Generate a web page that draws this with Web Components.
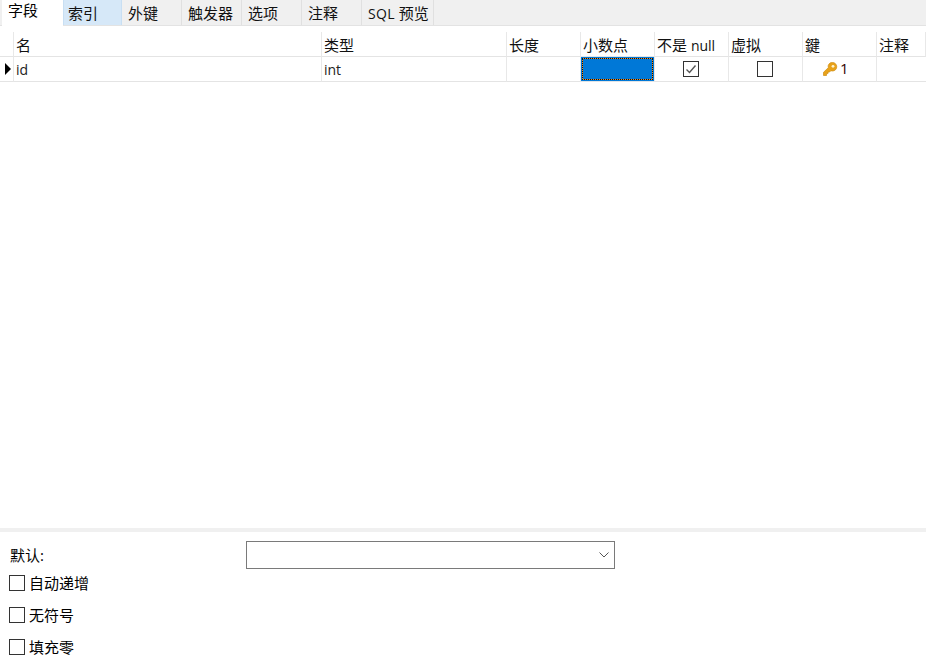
<!DOCTYPE html>
<html lang="zh">
<head>
<meta charset="UTF-8">
<title>字段</title>
<style>
  html, body { margin: 0; height: 100%; background: #fff; }
  body {
    font: 15px/20px "Open Sans", "Noto Sans CJK SC", sans-serif;
    color: #000;
    overflow: hidden;
  }
  design-page { height: 665px; }
</style>
</head>
<body>
<design-page>
  <tab-bar slot="tabs">
    <tab-item active>字段</tab-item>
    <tab-item hover>索引</tab-item>
    <tab-item>外键</tab-item>
    <tab-item>触发器</tab-item>
    <tab-item>选项</tab-item>
    <tab-item>注释</tab-item>
    <tab-item wide><span style="font-size:14px;letter-spacing:.3px">SQL</span> 预览</tab-item>
  </tab-bar>
  <field-grid slot="grid"></field-grid>
  <field-options slot="options"></field-options>
</design-page>

<script>
  class DesignPage extends HTMLElement {
    constructor() {
      super();
      this.attachShadow({ mode: "open" });
      this.shadowRoot.innerHTML = `
        <style>
          :host { display: flex; flex-direction: column; }
          .grid { display: block; flex: 1; min-height: 0; }
        </style>
        <slot name="tabs"></slot>
        <div class="grid"><slot name="grid"></slot></div>
        <slot name="options"></slot>
      `;
    }
  }

  class TabBar extends HTMLElement {
    constructor() {
      super();
      this.attachShadow({ mode: "open" });
      this.shadowRoot.innerHTML = `
        <style>
          :host {
            display: flex;
            height: 26px;
            box-sizing: border-box;
            padding-left: 2px;
            background: #f0f0f0;
            border-bottom: 1px solid #e3e3e3;
          }
        </style>
        <slot></slot>
      `;
    }
  }

  class TabItem extends HTMLElement {
    constructor() {
      super();
      this.attachShadow({ mode: "open" });
      this.shadowRoot.innerHTML = `
        <style>
          :host {
            display: block;
            width: 60px;
            height: 25px;
            box-sizing: border-box;
            padding: 3px 0 0 5px;
            border-right: 1px solid #e0e0e0;
            border-left: 1px solid transparent;
            white-space: nowrap;
            color: #111;
          }
          :host([active]) {
            width: 61px;
            height: 26px;
            padding: 0 0 0 6px;
            background: #fff;
            border: 0;
            color: #000;
          }
          :host([hover]) { width: 59px; padding-left: 4px; background: #d6e8f8; border-color: #c8dff3; }
          :host([wide]) { width: 72px; }
        </style>
        <slot></slot>
      `;
    }
  }

  const KEY_ICON = `<svg width="16" height="16" viewBox="0 0 16 16" aria-hidden="true">
    <path d="M10.500 1.500a4 4 0 0 1 0 8.500c-.6 0-1.100-.1-1.600-.3L7.500 11.100H6V12.600H4.500V14.500H1.500V11.300L6.300 6.700A4 4 0 0 1 10.500 1.500Z" fill="#e8a21a" stroke="#d08c10" stroke-width=".7"/>
    <circle cx="11" cy="5.300" r="1.400" fill="#fff3cf"/>
  </svg>`;

  class FieldGrid extends HTMLElement {
    constructor() {
      super();
      this.attachShadow({ mode: "open" });
      const heads = ["名", "类型", "长度", "小数点", `不是 <span class="latin">null</span>`, "虚拟", "鍵", "注释"];
      this.shadowRoot.innerHTML = `
        <style>
          :host { display: block; padding-top: 6px; }
          .table {
            display: grid;
            grid-template-columns: 14px 308px 185px 74px 74px 74px 74px 74px 1fr;
            grid-template-rows: 25px 25px;
          }
          .head, .cell {
            box-sizing: border-box;
            border-right: 1px solid #e8e8e8;
            border-bottom: 1px solid #e4e4e4;
            padding: 3px 0 0 2px;
            white-space: nowrap;
            overflow: hidden;
          }
          .head { padding-top: 3px; color: #111; }
          .head:last-child, .cell:last-child { border-right: 0; }
          .latin { font-size: 14px; }
          .cell { color: #222; }
          .marker { display: flex; align-items: center; padding: 0 0 0 5px; }
          .marker i {
            display: block; width: 0; height: 0;
            border-left: 6px solid #000;
            border-top: 6px solid transparent;
            border-bottom: 6px solid transparent;
          }
          .center { display: flex; align-items: center; justify-content: center; padding: 0 1px 0 0; }
          .sel { padding: 0; }
          .sel div {
            box-sizing: border-box;
            height: 100%;
            border: 1px solid #0078d7;
            background: #0078d7;
          }
          .sel div div {
            border: 1px dotted #111;
            background: linear-gradient(#0078d7, #0078d7) padding-box, #f08a1d border-box;
          }
          .key { display: flex; align-items: center; gap: 2px; padding: 0 0 0 19px; }
          .key span { margin-top: -3px; font-size: 15px; color: #300; }
          .box {
            display: block;
            width: 16px; height: 16px;
            box-sizing: border-box;
            border: 1px solid #333;
            background: #fff;
          }
          .box svg { display: block; }
        </style>
        <div class="table">
          <div class="head"></div>
          ${heads.map((h) => `<div class="head">${h}</div>`).join("")}
          <div class="cell marker"><i></i></div>
          <div class="cell latin">id</div>
          <div class="cell latin">int</div>
          <div class="cell"></div>
          <div class="cell sel"><div><div></div></div></div>
          <div class="cell center"><span class="box"><svg width="14" height="14" viewBox="0 0 14 14"><path d="M2.500 7.500 5.500 10.500 11.500 3.500" fill="none" stroke="#555" stroke-width="1.400"/></svg></span></div>
          <div class="cell center"><span class="box"></span></div>
          <div class="cell key">${KEY_ICON}<span>1</span></div>
          <div class="cell"></div>
        </div>
      `;
    }
  }

  class CheckRow extends HTMLElement {
    constructor() {
      super();
      this.attachShadow({ mode: "open" });
      this.shadowRoot.innerHTML = `
        <style>
          :host { display: flex; align-items: center; gap: 4px; height: 16px; }
          .box { width: 16px; height: 16px; box-sizing: border-box; border: 1px solid #333; background: #fff; }
        </style>
        <span class="box"></span><slot></slot>
      `;
    }
  }

  class FieldOptions extends HTMLElement {
    constructor() {
      super();
      this.attachShadow({ mode: "open" });
      this.shadowRoot.innerHTML = `
        <style>
          :host {
            display: block;
            height: 137px;
            box-sizing: border-box;
            border-top: 4px solid #f0f0f0;
            padding: 9px 0 0 9px;
          }
          .line { display: flex; height: 28px; }
          .label { width: 237px; padding: 4px 0 0 1px; box-sizing: border-box; }
          .select {
            width: 369px; height: 28px;
            box-sizing: border-box;
            border: 1px solid #7a7a7a;
            display: flex; align-items: center; justify-content: flex-end;
            padding-right: 4px;
          }
          .rows { display: flex; flex-direction: column; gap: 16px; margin-top: 6px; }
        </style>
        <div class="line">
          <div class="label">默认:</div>
          <div class="select">
            <svg width="12" height="8" viewBox="0 0 12 8"><path d="M1.500 1.500 6 6 10.500 1.500" fill="none" stroke="#555" stroke-width="1"/></svg>
          </div>
        </div>
        <div class="rows">
          <check-row>自动递增</check-row>
          <check-row>无符号</check-row>
          <check-row>填充零</check-row>
        </div>
      `;
    }
  }

  customElements.define("design-page", DesignPage);
  customElements.define("tab-bar", TabBar);
  customElements.define("tab-item", TabItem);
  customElements.define("field-grid", FieldGrid);
  customElements.define("check-row", CheckRow);
  customElements.define("field-options", FieldOptions);
</script>
</body>
</html>
